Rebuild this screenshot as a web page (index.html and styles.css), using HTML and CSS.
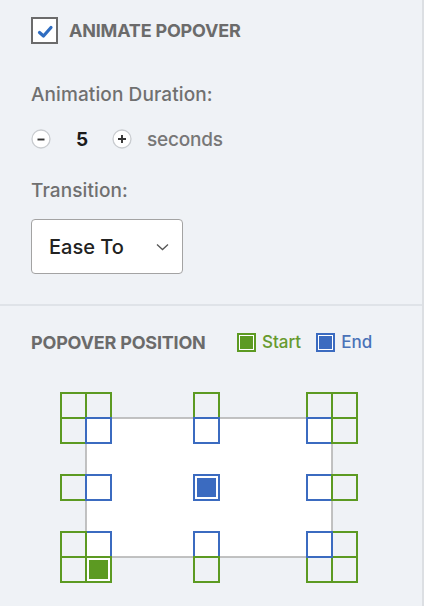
FILE: index.html
```html
<!DOCTYPE html>
<html lang="en">
<head>
<meta charset="utf-8">
<title>Popover settings</title>
<link rel="stylesheet" href="styles.css">
</head>
<body>
<div class="panel">
  <section class="settings">
    <label class="check-row">
      <span class="checkbox">
        <svg width="22" height="22" viewBox="0 0 22 22"><path d="M5.5 12.5 L9.5 16 L17 7.5" fill="none" stroke="#2f6dc1" stroke-width="3.2" stroke-linecap="round" stroke-linejoin="round"/></svg>
      </span>
      <span class="check-label">ANIMATE POPOVER</span>
    </label>

    <div class="field-label duration-label">Animation Duration:</div>
    <div class="stepper">
      <span class="step-btn">
        <svg width="20" height="20" viewBox="0 0 20 20"><circle cx="10" cy="10" r="9" fill="#fff" stroke="#c9ccd0" stroke-width="1.3"/><path d="M6.5 10.5 H13.5" stroke="#333" stroke-width="1.9"/></svg>
      </span>
      <span class="step-value">5</span>
      <span class="step-btn plus">
        <svg width="20" height="20" viewBox="0 0 20 20"><circle cx="10" cy="10" r="9" fill="#fff" stroke="#c9ccd0" stroke-width="1.3"/><path d="M6 10 H14 M10 6 V14" stroke="#333" stroke-width="1.9"/></svg>
      </span>
      <span class="step-unit">seconds</span>
    </div>

    <div class="field-label transition-label">Transition:</div>
    <div class="select">
      <span class="select-value">Ease To</span>
      <svg class="chevron" width="13" height="8" viewBox="0 0 13 8"><path d="M1 1.5 L6.5 6.5 L12 1.5" fill="none" stroke="#555" stroke-width="1.3"/></svg>
    </div>
  </section>

  <section class="position">
    <div class="pos-head">
      <span class="pos-title">POPOVER POSITION</span>
      <span class="swatch start"></span><span class="legend start-text">Start</span>
      <span class="swatch end"></span><span class="legend end-text">End</span>
    </div>

    <svg class="diagram" width="300" height="192" viewBox="0 0 300 192">
      <rect x="26" y="26" width="246" height="139" fill="#fff" stroke="#b3b3b3" stroke-width="1.6"/>
      <g fill="none" stroke="#5c9a22" stroke-width="2">
        <rect x="1" y="1" width="25" height="25"/>
        <rect x="26" y="1" width="25" height="25"/>
        <rect x="1" y="26" width="25" height="25"/>
        <rect x="134" y="1" width="25" height="25"/>
        <rect x="247" y="1" width="25" height="25"/>
        <rect x="272" y="1" width="25" height="25"/>
        <rect x="272" y="26" width="25" height="25"/>
        <rect x="1" y="83" width="25" height="25"/>
        <rect x="272" y="83" width="25" height="25"/>
        <rect x="1" y="140" width="25" height="25"/>
        <rect x="1" y="165" width="25" height="25"/>
        <rect x="134" y="165" width="25" height="25"/>
        <rect x="272" y="140" width="25" height="25"/>
        <rect x="247" y="165" width="25" height="25"/>
        <rect x="272" y="165" width="25" height="25"/>
      </g>
      <g fill="none" stroke="#3b6bc0" stroke-width="2">
        <rect x="26" y="26" width="25" height="25"/>
        <rect x="134" y="26" width="25" height="25"/>
        <rect x="247" y="26" width="25" height="25"/>
        <rect x="26" y="83" width="25" height="25"/>
        <rect x="247" y="83" width="25" height="25"/>
        <rect x="26" y="140" width="25" height="25"/>
        <rect x="134" y="140" width="25" height="25"/>
        <rect x="247" y="140" width="25" height="25"/>
      </g>
      <g stroke="#5c9a22" stroke-width="2">
        <path d="M272 25 V52"/>
        <path d="M272 82 V109"/>
        <path d="M26 139 V166"/>
        <path d="M133 165 H160"/>
      </g>
      <rect x="134" y="83" width="25" height="25" fill="#fff" stroke="#3b6bc0" stroke-width="2"/>
      <rect x="137" y="86" width="19" height="19" fill="#3b6bc0"/>
      <rect x="26" y="165" width="25" height="25" fill="#fff" stroke="#5c9a22" stroke-width="2"/>
      <rect x="29" y="168" width="19" height="19" fill="#5c9a22"/>
    </svg>
  </section>
</div>
</body>
</html>
```

FILE: styles.css
```css
html, body {
  margin: 0;
  padding: 0;
}

body {
  background: #ffffff;
  font-family: Inter, "Liberation Sans", sans-serif;
  color: #6f6f6f;
}

.panel {
  width: 424px;
  height: 606px;
  box-sizing: border-box;
  background: #eff2f6;
  border-right: 2px solid #dcdfe3;
  overflow: hidden;
}

.settings {
  padding: 17px 0 30px 31px;
  border-bottom: 2px solid #dfe3e8;
}

.check-row {
  display: flex;
  align-items: center;
  height: 27px;
}

.checkbox {
  width: 27px;
  height: 27px;
  box-sizing: border-box;
  border: 2px solid #6b6b6b;
  background: #fff;
  display: flex;
  align-items: center;
  justify-content: center;
}

.check-label {
  margin-left: 11px;
  font-size: 18px;
  font-weight: 700;
  color: #6b6b6b;
  letter-spacing: -0.2px;
}

.field-label {
  font-size: 19px;
  font-weight: 500;
  letter-spacing: 0.1px;
  line-height: 24px;
  height: 24px;
  color: #707070;
}

.duration-label {
  margin-top: 39px;
}

.stepper {
  display: flex;
  align-items: center;
  height: 20px;
  margin-top: 22px;
}

.step-btn {
  display: block;
  width: 20px;
  height: 20px;
}

.step-btn svg {
  display: block;
}

.step-value {
  margin-left: 25px;
  width: 12px;
  font-size: 19px;
  font-weight: 700;
  color: #1b1b1b;
}

.step-btn.plus {
  margin-left: 24px;
}

.step-unit {
  margin-left: 15px;
  font-size: 19px;
  font-weight: 500;
  letter-spacing: -0.2px;
  color: #777;
}

.transition-label {
  margin-top: 30px;
}

.select {
  margin-top: 16px;
  width: 152px;
  height: 55px;
  box-sizing: border-box;
  border: 1px solid #a3a3a3;
  border-radius: 4px;
  background: #fff;
  display: flex;
  align-items: center;
  justify-content: space-between;
  padding: 0 13px 0 17px;
}

.select-value {
  font-size: 20px;
  font-weight: 500;
  color: #222;
}

.chevron {
  display: block;
}

.position {
  padding: 26px 0 0 31px;
}

.pos-head {
  display: flex;
  align-items: center;
  height: 20px;
}

.pos-title {
  width: 206px;
  font-size: 18px;
  font-weight: 700;
  color: #6b6b6b;
  letter-spacing: -0.2px;
  white-space: nowrap;
}

.swatch {
  width: 19px;
  height: 19px;
  box-sizing: border-box;
  border: 2px solid;
  box-shadow: inset 0 0 0 1px #fff;
}

.swatch.start {
  border-color: #5c9a22;
  background: #5c9a22;
}

.swatch.end {
  border-color: #3b6bc0;
  background: #3b6bc0;
  margin-left: 15px;
}

.legend {
  margin-left: 6px;
  font-size: 17px;
  font-weight: 500;
}

.start-text {
  color: #679a2e;
}

.end-text {
  color: #4a72b8;
}

.diagram {
  display: block;
  margin: 40px 0 0 29px;
}
```
